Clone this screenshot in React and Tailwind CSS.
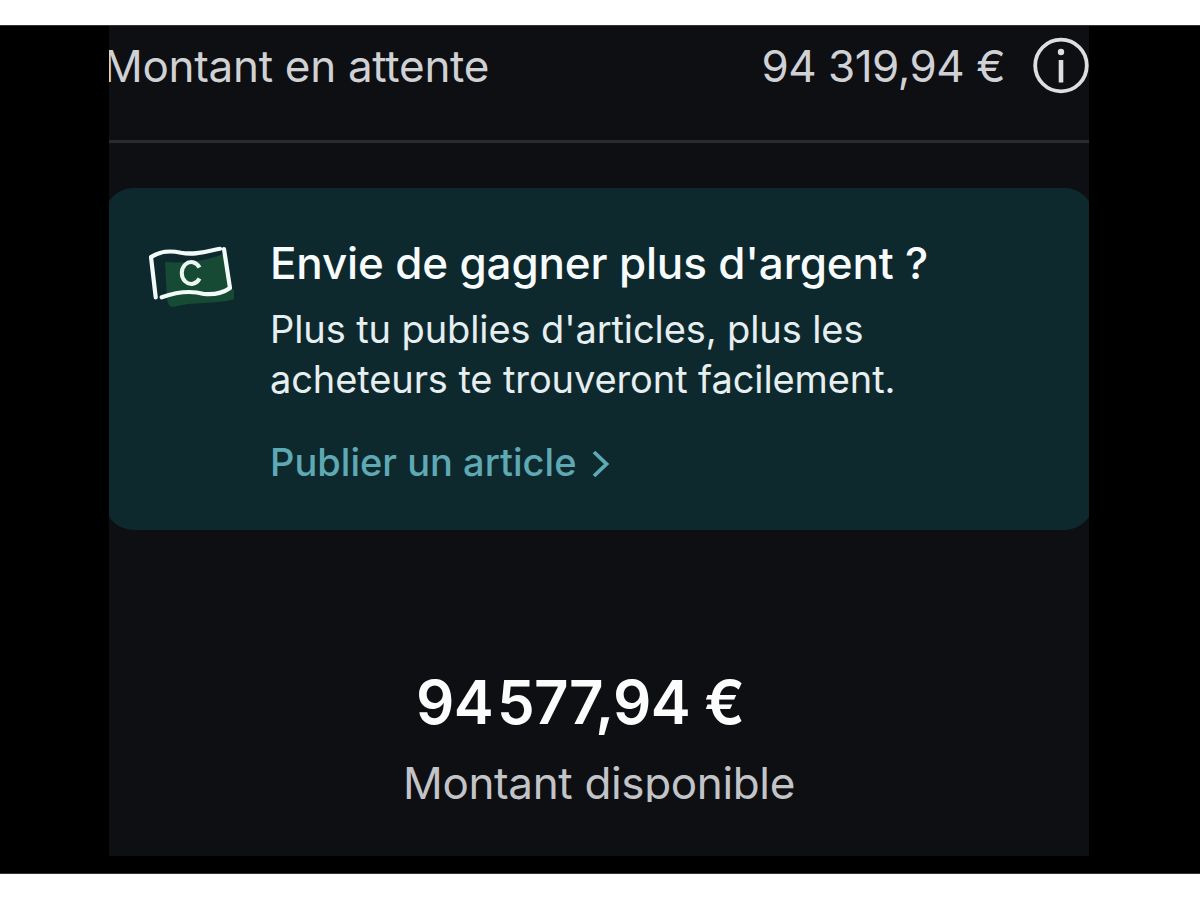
import React from 'react';

function InfoIcon() {
  return (
    <svg viewBox="0 0 56 56" className="h-14 w-14 shrink-0 overflow-visible" fill="none">
      <circle cx="28" cy="27.5" r="25.8" stroke="#dededf" strokeWidth="3.8" />
      <circle cx="28" cy="14" r="3.2" fill="#dededf" />
      <path d="M28 22V44.5" stroke="#dededf" strokeWidth="4.6" />
    </svg>
  );
}

function BanknoteIcon() {
  return (
    <svg viewBox="0 0 90 66" className="h-[66px] w-[90px] shrink-0" fill="none">
      {/* green fill sits slightly off the outline */}
      <path d="M21 20C36 21 55 21 80 12L86 47L91 48V57C70 63 50 59 29 65Q24 65 23 57Z" fill="#164a35" />
      <path
        d="M11.7 55.3L7 15C17 8.500 27 8.500 37 10.800C51 13.500 63 9 76 6.800M80 7L86 46C79 51 70 52.800 60 52C46 48 31 50.500 17.700 55.300"
        stroke="#f1faf7"
        strokeWidth="4.2"
        strokeLinecap="round"
        strokeLinejoin="round"
      />
      <path d="M55.5 25.500A9.500 11 0 1 0 55.500 36.500" stroke="#e9f7f0" strokeWidth="4" />
    </svg>
  );
}

function PromoCard() {
  return (
    <section className="-mx-1 mt-[45px] flex h-[342px] rounded-[28px] bg-[#0d292e] pt-[51px] pl-[39px]">
      <div className="pt-[3px]">
        <BanknoteIcon />
      </div>
      <div className="ml-[36px]">
        <h2 className="h-[60px] text-[44px] leading-[49px] font-medium tracking-[-0.17px] whitespace-nowrap text-[#f7fbfb]">
          Envie de gagner plus d'argent ?
        </h2>
        <p className="mt-[5px] text-[38px] leading-[50px] tracking-[-0.1px] whitespace-nowrap text-[#e6eeef]">
          Plus tu publies d'articles, plus les
          <br />
          acheteurs te trouveront facilement.
        </p>
        <a href="#" className="mt-[33px] flex items-center text-[38px] leading-[50px] font-medium tracking-[0.02px] text-[#5fa9b5]">
          <span>Publier un article</span>
          <svg viewBox="0 0 18 28" className="mt-1 ml-[15px] h-7 w-[18px]" fill="none">
            <path d="M2 2L14.5 14L2 26" stroke="#5fa9b5" strokeWidth="3.8" />
          </svg>
        </a>
      </div>
    </section>
  );
}

export default function App() {
  return (
    <div className="h-[899px] w-[1200px] overflow-hidden bg-white pt-[25px] font-['Inter',sans-serif]">
      <main className="h-[849px] border-y border-[#333335] bg-black">
        <div className="ml-[109px] h-[830px] w-[980px] overflow-hidden bg-[#0e0f13]">
          <header className="flex h-[114px] items-start pt-[10px] text-[44px] leading-[60px] text-[#d0d1d5]">
            <span className="-ml-[6px] tracking-[-0.3px] whitespace-nowrap">Montant en attente</span>
            <div className="ml-auto flex items-start">
              <span className="mr-[28px] tracking-[-0.5px] whitespace-nowrap">94 319,94 €</span>
              <div className="pt-[2px]">
                <InfoIcon />
              </div>
            </div>
          </header>
          <div className="h-[3px] bg-[#2a2b2e]" />
          <PromoCard />
          <div className="flex flex-col pt-[137px]">
            <strong className="ml-[307px] text-[60px] leading-[71px] font-semibold tracking-[-0.75px] whitespace-nowrap text-[#fcfcfd]">
              94&#8202;577,94 €
            </strong>
            <span className="mt-[15px] ml-[294px] h-[49px] overflow-hidden text-[44px] leading-[61px] tracking-[-0.35px] whitespace-nowrap text-[#c3c4c8]">
              Montant disponible
            </span>
          </div>
        </div>
      </main>
    </div>
  );
}
